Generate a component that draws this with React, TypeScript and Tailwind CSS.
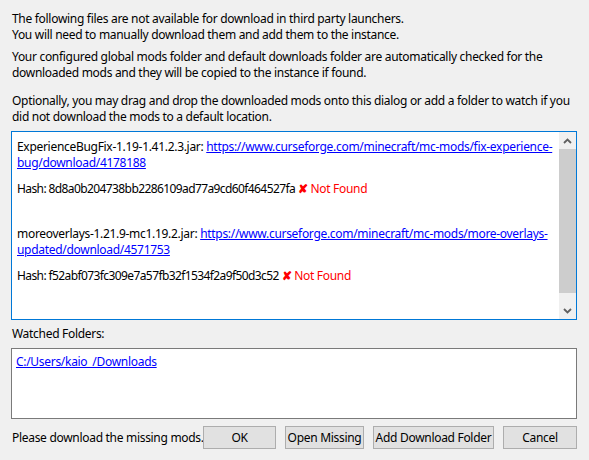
import React from 'react'

type ModEntry = {
  name: string
  url: [string, string]
  hash: string
}

const mods: ModEntry[] = [
  {
    name: 'ExperienceBugFix-1.19-1.41.2.3.jar:',
    url: ['https://www.curseforge.com/minecraft/mc-mods/fix-experience-', 'bug/download/4178188'],
    hash: '8d8a0b204738bb2286109ad77a9cd60f464527fa',
  },
  {
    name: 'moreoverlays-1.21.9-mc1.19.2.jar:',
    url: ['https://www.curseforge.com/minecraft/mc-mods/more-overlays-', 'updated/download/4571753'],
    hash: 'f52abf073fc309e7a57fb32f1534f2a9f50d3c52',
  },
]

function ModBlock({ mod, first }: { mod: ModEntry; first: boolean }) {
  return (
    <div className={first ? '' : 'mt-[29px]'}>
      <div className="whitespace-nowrap">
        {mod.name}{' '}
        <a className="text-[#0000ff] underline">{mod.url[0]}</a>
      </div>
      <div className="whitespace-nowrap">
        <a className="text-[#0000ff] underline">{mod.url[1]}</a>
      </div>
      <div className="mt-[10px] whitespace-nowrap">
        <span className="tracking-[-0.6px]">Hash: {mod.hash}</span>{' '}
        <span className="text-[#ff0000] font-bold">✘</span>{' '}
        <span className="text-[#ff0000]">Not Found</span>
      </div>
    </div>
  )
}

function Scrollbar() {
  return (
    <div className="w-[17px] shrink-0 flex flex-col bg-[#f0f0f0]">
      <div className="h-[17px] flex items-center justify-center">
        <svg width="9" height="6" viewBox="0 0 9 6">
          <path d="M1 5 L4.5 1.5 L8 5" stroke="#606060" strokeWidth="1.8" fill="none" />
        </svg>
      </div>
      <div className="h-[144px] bg-[#cdcdcd]" />
      <div className="flex-1" />
      <div className="h-[17px] flex items-center justify-center">
        <svg width="9" height="6" viewBox="0 0 9 6">
          <path d="M1 1 L4.5 4.5 L8 1" stroke="#606060" strokeWidth="1.8" fill="none" />
        </svg>
      </div>
    </div>
  )
}

function Button({ label, width }: { label: string; width: string }) {
  return (
    <button className={`${width} shrink-0 h-[23px] bg-[#e1e1e1] border border-[#adadad] text-black leading-none whitespace-nowrap`}>
      {label}
    </button>
  )
}

export default function App() {
  return (
    <div
      className="w-[589px] h-[460px] overflow-hidden bg-[#f0f0f0] text-black text-[12px] leading-[16px] tracking-[-0.3px] pl-[11px] pr-[12px] pt-[11px]"
      style={{ fontFamily: '"Noto Sans", "Open Sans", sans-serif' }}
    >
      {/* Intro text */}
      <p className="pl-[1px] whitespace-nowrap">
        The following files are not available for download in third party launchers.
        <br />
        You will need to manually download them and add them to the instance.
      </p>
      <p className="pl-[1px] mt-[6px] whitespace-nowrap">
        Your configured global mods folder and default downloads folder are automatically checked for the
        <br />
        downloaded mods and they will be copied to the instance if found.
      </p>
      <p className="pl-[1px] mt-[12px] whitespace-nowrap">
        Optionally, you may drag and drop the downloaded mods onto this dialog or add a folder to watch if you
        <br />
        did not download the mods to a default location.
      </p>

      {/* Mods list */}
      <div className="mt-[6px] h-[189px] border border-[#0078d7] bg-white flex">
        <div className="flex-1 min-w-0 pl-[5px] pt-[7px] overflow-hidden">
          {mods.map((mod, i) => (
            <ModBlock key={i} mod={mod} first={i === 0} />
          ))}
        </div>
        <Scrollbar />
      </div>

      <div className="mt-[6px] pl-[1px]">Watched Folders:</div>
      <div className="mt-[6px] h-[71px] border border-[#7a7a7a] bg-white pl-[4px] pt-[5px]">
        <a className="text-[#0000ff] underline">C:/Users/kaio_/Downloads</a>
      </div>

      {/* Footer */}
      <div className="mt-[7px] flex items-center gap-[9px]">
        <span className="flex-1 min-w-0 pl-[1px] whitespace-nowrap">Please download the missing mods.</span>
        <Button label="OK" width="w-[73px]" />
        <Button label="Open Missing" width="w-[79px]" />
        <Button label="Add Download Folder" width="w-[121px]" />
        <Button label="Cancel" width="w-[74px]" />
      </div>
    </div>
  )
}
